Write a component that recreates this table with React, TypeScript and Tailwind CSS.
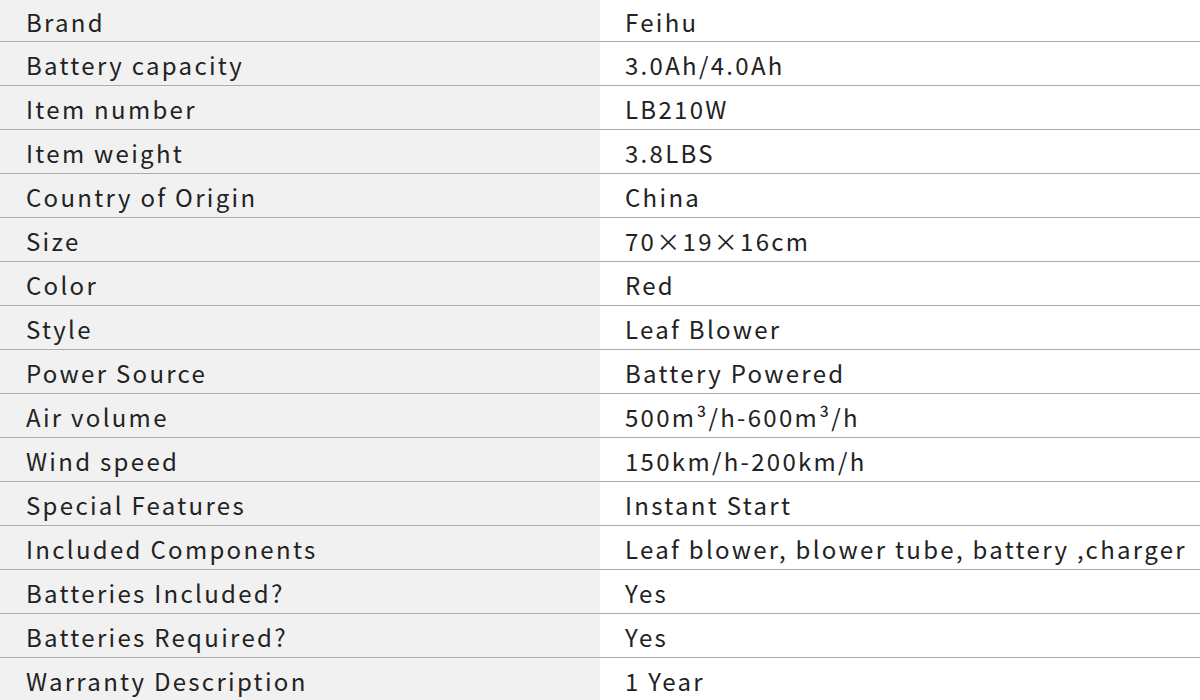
const specs: [string, string][] = [
  ["Brand", "Feihu"],
  ["Battery capacity", "3.0Ah/4.0Ah"],
  ["Item number", "LB210W"],
  ["Item weight", "3.8LBS"],
  ["Country of Origin", "China"],
  ["Size", "70×19×16cm"],
  ["Color", "Red"],
  ["Style", "Leaf Blower"],
  ["Power Source", "Battery Powered"],
  ["Air volume", "500m³/h-600m³/h"],
  ["Wind speed", "150km/h-200km/h"],
  ["Special Features", "Instant Start"],
  ["Included Components", "Leaf blower, blower tube, battery ,charger"],
  ["Batteries Included?", "Yes"],
  ["Batteries Required?", "Yes"],
  ["Warranty Description", "1 Year"],
];

export default function App() {
  return (
    <div
      className="w-[1200px] h-[700px] overflow-hidden bg-white text-[#222] text-[24px] tracking-[2.3px]"
      style={{ fontFamily: '"Noto Sans CJK SC", "Noto Sans", sans-serif' }}>
      {specs.map(([label, value], i) => (
        <div
          key={label}
          className={
            "grid grid-cols-[600px_600px] border-b border-[#ababab] " +
            (i === 0 ? "h-[42px]" : "h-[44px]")
          }>
          <div className="bg-[#f1f1f1] flex items-center pl-[26px] pt-[3px]">
            {label}
          </div>
          <div className="flex items-center pl-[25px] pt-[3px] whitespace-nowrap">
            {value}
          </div>
        </div>
      ))}
    </div>
  );
}
